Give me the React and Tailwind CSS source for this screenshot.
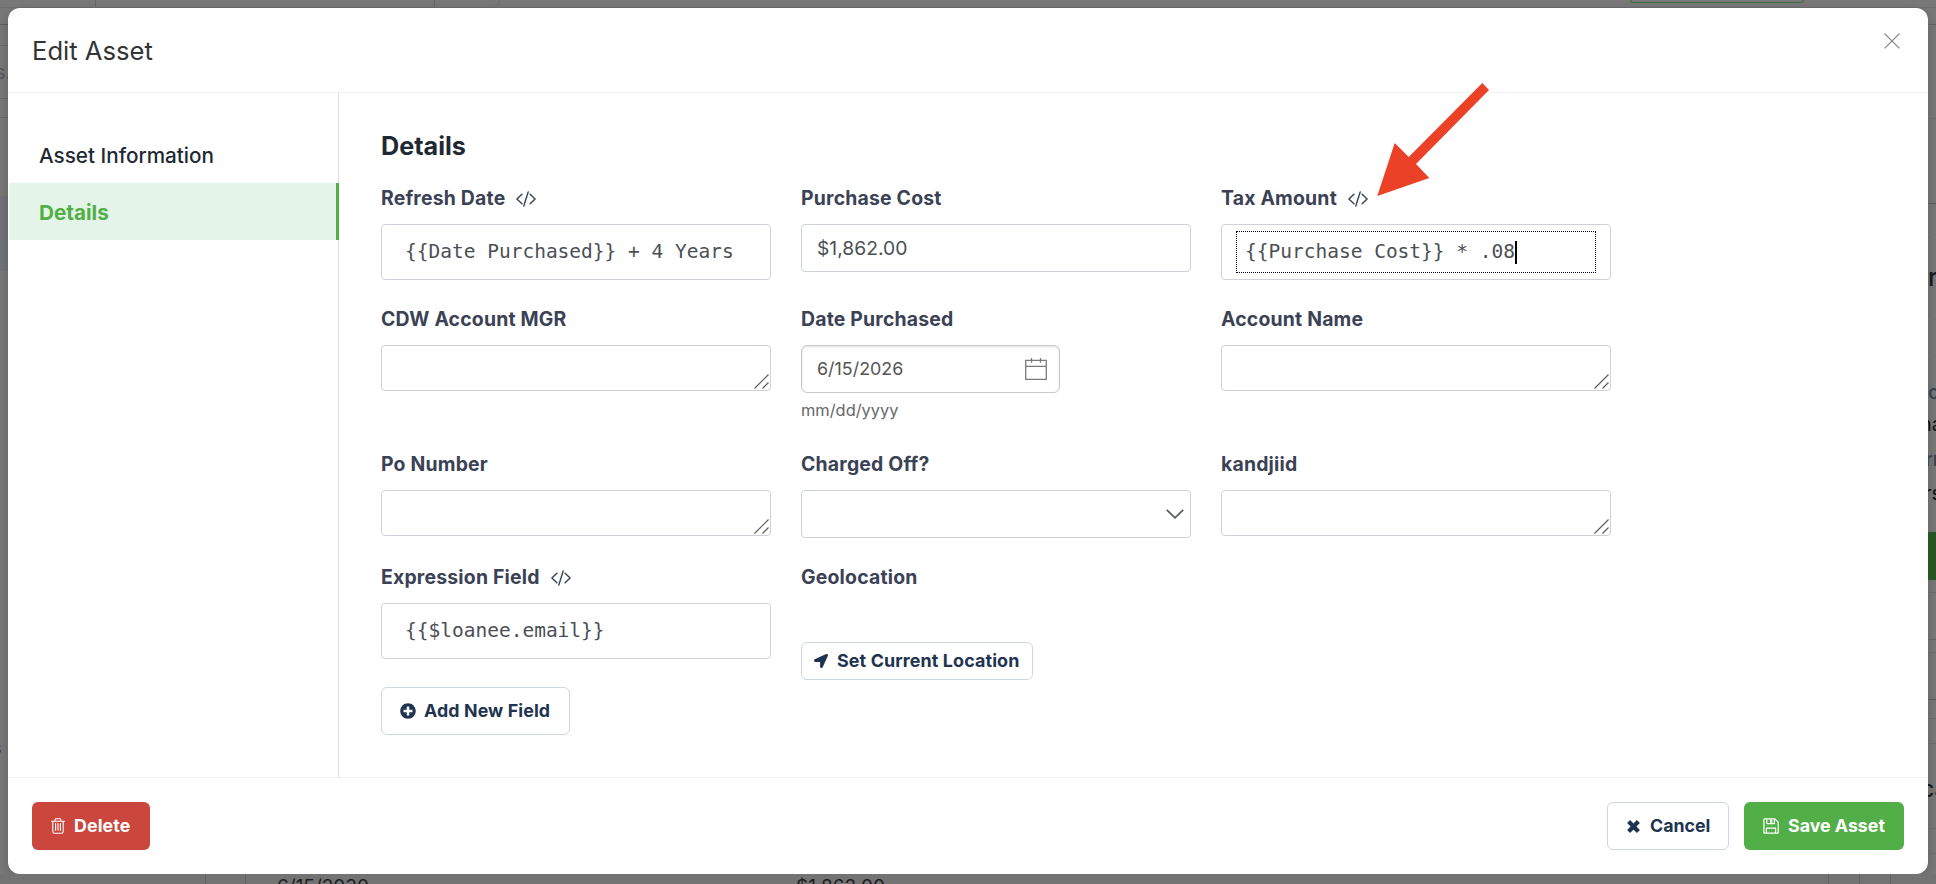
import React, { useState } from 'react';
import { FaLocationArrow, FaPlusCircle } from 'react-icons/fa';

const CodeIcon = () => (
    <svg className="w-5 h-4 shrink-0" viewBox="0 0 20 16" fill="none" stroke="#3b4255" strokeWidth="1.4" strokeLinecap="round" strokeLinejoin="round">
        <path d="M5.9 3.2 L0.9 8 L5.9 12.8 M14.1 3.2 L19.1 8 L14.1 12.8 M12.2 1 L7.8 15" />
    </svg>
);

const TrashIcon = () => (
    <svg className="w-[14px] h-4 shrink-0" viewBox="0 0 14 16" fill="none" stroke="currentColor" strokeWidth="1.1" strokeLinecap="round">
        <path d="M0.6 3.2 H13.4 M4.2 3 V1.6 Q4.2 0.8 5 0.8 H9 Q9.8 0.8 9.8 1.6 V3 M1.8 3.4 V13.6 Q1.8 15.3 3.4 15.3 H10.6 Q12.2 15.3 12.2 13.6 V3.4" />
        <path d="M4.6 5.6 V12.3 M7 5.6 V12.3 M9.4 5.6 V12.3" />
    </svg>
);

const SaveIcon = () => (
    <svg className="w-4 h-4 shrink-0" viewBox="0 0 16 16" fill="none" stroke="currentColor" strokeWidth="1.2" strokeLinejoin="round">
        <path d="M0.9 1.4 Q0.9 0.8 1.5 0.8 H11.8 L15.2 4.2 V14.6 Q15.2 15.2 14.6 15.2 H1.5 Q0.9 15.2 0.9 14.6 Z" />
        <path d="M3.8 1 V5.6 H11.4 V1 M3.4 15 V10.2 H12.6 V15" />
        <path d="M8.2 1.4 V4.8" strokeWidth="2.2" />
    </svg>
);

const TimesIcon = () => (
    <svg className="w-[13px] h-[13px] shrink-0" viewBox="0 0 13 13" fill="none" stroke="currentColor" strokeWidth="4.2">
        <path d="M1.6 1.6 L11.4 11.4 M11.4 1.6 L1.6 11.4" />
    </svg>
);

const CloseIcon = () => (
    <svg className="w-4 h-4" viewBox="0 0 16 16" fill="none" stroke="#85878f" strokeWidth="1.3">
        <path d="M0.6 0.6 L15.4 15.4 M15.4 0.6 L0.6 15.4" />
    </svg>
);

const CalendarIcon = () => (
    <svg className="w-[22px] h-[22px]" viewBox="0 0 22 22" fill="none" stroke="#7a7a7a" strokeWidth="1.3">
        <path d="M0.7 2.3 H21.3 V21.3 H0.7 Z M0.7 8.3 H21.3 M6.5 0 V4.8 M15.5 0 V4.8" />
    </svg>
);

const ChevronIcon = () => (
    <svg className="w-[18px] h-[10px]" viewBox="0 0 18 10" fill="none" stroke="#55585c" strokeWidth="1.7">
        <path d="M0.8 0.8 L9 8.8 L17.2 0.8" />
    </svg>
);

const ResizeHandle = () => (
    <svg className="w-[15px] h-[15px]" viewBox="0 0 15 15" fill="none" stroke="#5c5c5c" strokeWidth="1.2">
        <path d="M0.5 14.5 L14.5 0.5 M8.5 14.5 L14.5 8.5" />
    </svg>
);

const Field = ({ label, code, children }) => (
    <div className="w-[390px]">
        <div className="h-[30px] mb-[11px] pt-0.5 flex items-center gap-[11px] text-[19.4px] tracking-[0.2px] font-bold text-[#3b4255] whitespace-nowrap">
            <span>{label}</span>
            {code && <CodeIcon />}
        </div>
        {children}
    </div>
);

const TextArea = () => (
    <div className="h-[46px] flex items-end justify-end pr-px pb-px border border-[#cdd1da] rounded">
        <ResizeHandle />
    </div>
);

const Expression = ({ value, focused }) => (
    <div className="h-14 px-[14px] flex items-center border border-[#cdd1da] rounded font-['DejaVu_Sans_Mono',monospace] text-[19.5px] text-[#4b5055]">
        <div className={`w-full h-[42px] px-2 flex items-center border ${focused ? 'border-dotted border-black' : 'border-transparent'}`}>
            <span className="whitespace-pre">{value}</span>
            {focused && <span className="w-0.5 h-[23px] bg-black" />}
        </div>
    </div>
);

// Sliver of the record page that stays visible left of the dialog
const LeftStrip = () => (
    <div className="w-2 shrink-0 overflow-hidden flex flex-col">
        <div className="h-[17px] border-b border-[#5f5f62]" />
        <div className="h-[21px] border-b border-[#6c6c70]" />
        <div className="h-[53px] flex items-center border-b border-[#6a6a6e] text-[20px] text-[#55555a]"><span className="-ml-[5px]">s.</span></div>
        <div className="h-[19px] border-b border-[#6c6c70]" />
        <div className="h-[78px]" />
        <div className="h-[75px] bg-[#727479]" />
        <div className="h-[464px]" />
        <div className="h-[24px] flex items-center text-[18px] text-[#333] -ml-2">s</div>
    </div>
);

const RightStrip = () => (
    <div className="w-2 shrink-0 overflow-hidden flex flex-col leading-none">
        <div className="h-[17px] border-b border-[#5f5f62]" />
        <div className="h-[94px] border-b border-[#6c6c70]" />
        <div className="h-[85px] border-b border-[#5c5c60]" />
        <div className="h-[31px] border-b border-[#707074]" />
        <div className="h-[85px] flex items-center border-b border-[#707074] text-[25px] font-medium text-[#18191b]">ri</div>
        <div className="h-[37px] border-b border-[#707074]" />
        <div className="h-[18px]" />
        <div className="h-[34px] flex items-center text-[19px] font-semibold text-[#3b4255]">c</div>
        <div className="h-[30px] flex items-center text-[20px] text-[#101113]"><span className="-ml-2">na</span></div>
        <div className="h-[40px] flex items-center text-[19px] font-semibold text-[#3b4255]"><span className="-ml-[3px]">rr</span></div>
        <div className="h-[28px] flex items-center text-[20px] text-[#101113]"><span className="-ml-1">rs</span></div>
        <div className="h-[25px]" />
        <div className="h-[48px] bg-[#265423]" />
        <div className="h-[13px] border-b border-[#68686c]" />
        <div className="h-[47px] border-b border-[#62626e]" />
        <div className="h-[13px] border-b border-[#68686c]" />
        <div className="h-[47px] border-b border-[#5c5c60]" />
        <div className="h-[19px] border-b border-[#68686c]" />
        <div className="h-[25px] border-b border-[#68686c]" />
        <div className="h-[30px]" />
        <div className="h-[30px] flex items-center text-[23px] font-medium text-[#18191b]"><span className="-ml-[7px]">ca</span></div>
        <div className="h-[25px] border-b border-[#6c6c70]" />
        <div className="h-[25px] border-b border-[#6c6c70]" />
    </div>
);

const navItems = ['Asset Information', 'Details'];

const App = () => {
    const [active, setActive] = useState('Details');

    return (
        <div className="relative w-[1936px] h-[884px] overflow-hidden flex flex-col bg-[#797979] font-['Inter','Liberation_Sans',sans-serif]">
            <div className="h-2 shrink-0 flex border-b border-[#6e6e70]">
                <div className="w-24 border-r border-[#68686a]" />
                <div className="w-[339px] border-r border-[#68686a]" />
                <div className="w-[65px] border-r border-[#68686a] rounded-br-lg" />
                <div className="w-[174px] h-[3px] ml-[1130px] border border-t-0 border-[#3c6b41] rounded-b" />
            </div>

            <div className="h-[866px] shrink-0 flex">
                <LeftStrip />

                <div className="w-[1920px] flex flex-col bg-white rounded-xl shadow-[0_4px_14px_rgba(0,0,0,0.2)]">
                    <div className="h-[85px] shrink-0 flex justify-between pl-6 pr-7 border-b border-[#f0f0f2]">
                        <h1 className="pt-[25px] text-[25.6px] leading-9 text-[#333536]">Edit Asset</h1>
                        <button type="button" className="self-start mt-[25px]" aria-label="Close">
                            <CloseIcon />
                        </button>
                    </div>

                    <div className="h-[685px] shrink-0 flex border-b border-[#f0f0f2]">
                        <nav className="w-[331px] pt-[33px] pl-px border-r border-[#dcdde8]">
                            {navItems.map((item) => (
                                <button
                                    key={item}
                                    type="button"
                                    onClick={() => setActive(item)}
                                    className={`w-[330px] h-[57px] pl-[30px] pt-0.5 flex items-center text-[20.7px] ${
                                        active === item
                                        ? 'bg-[#e5f4e8] border-r-3 border-[#52af47] font-bold text-[#52af47]'
                                        : 'font-medium text-[#1f2933]'
                                    }`}
                                >
                                    {item}
                                </button>
                            ))}
                        </nav>

                        <div className="pl-[42px] pt-9">
                            <h2 className="h-[34px] mb-5 text-[25.2px] leading-[34px] font-bold text-[#1f2933]">Details</h2>

                            <div className="w-[1230px] flex flex-wrap gap-x-[30px] gap-y-6">
                                <Field label="Refresh Date" code>
                                    <Expression value="{{Date Purchased}} + 4 Years" />
                                </Field>
                                <Field label="Purchase Cost">
                                    <div className="h-12 px-[15px] pt-px flex items-center border border-[#cdd1da] rounded text-[19.3px] text-[#4b5055]">$1,862.00</div>
                                </Field>
                                <Field label="Tax Amount" code>
                                    <Expression value="{{Purchase Cost}} * .08" focused />
                                </Field>

                                <Field label="CDW Account MGR">
                                    <TextArea />
                                </Field>
                                <Field label="Date Purchased">
                                    <div className="w-[259px] h-12 pl-[15px] pr-3 flex items-center justify-between border border-[#c8c8c8] rounded-md shadow-[inset_0_1px_2px_rgba(0,0,0,0.12)] text-[17.9px] text-[#555]">
                                        <span className="pt-px">6/15/2026</span>
                                        <CalendarIcon />
                                    </div>
                                    <div className="h-8 pt-0.5 flex items-center text-[16.4px] text-[#66686b]">mm/dd/yyyy</div>
                                </Field>
                                <Field label="Account Name">
                                    <TextArea />
                                </Field>

                                <Field label="Po Number">
                                    <TextArea />
                                </Field>
                                <Field label="Charged Off?">
                                    <div className="h-12 pr-1.5 flex items-center justify-end border border-[#cdd1da] rounded">
                                        <ChevronIcon />
                                    </div>
                                </Field>
                                <Field label="kandjiid">
                                    <TextArea />
                                </Field>

                                <Field label="Expression Field" code>
                                    <Expression value="{{$loanee.email}}" />
                                </Field>
                                <Field label="Geolocation">
                                    <button type="button" className="w-[232px] h-[38px] mt-[50px] pl-3 flex items-center gap-[9px] border border-[#cfd5e2] rounded-md text-[17.9px] tracking-[0.12px] font-bold text-[#1e3450] whitespace-nowrap">
                                        <FaLocationArrow className="w-[14px] h-[14px]" />
                                        Set Current Location
                                    </button>
                                </Field>
                            </div>

                            <button type="button" className="w-[189px] h-12 mt-[7px] pl-[18px] flex items-center gap-[8px] border border-[#cfd5e2] rounded-md text-[17.8px] tracking-[0.12px] font-bold text-[#1e3450] whitespace-nowrap">
                                <FaPlusCircle className="w-4 h-4" />
                                Add New Field
                            </button>
                        </div>
                    </div>

                    <div className="flex-1 flex items-center justify-between px-6 text-[17.8px] font-bold">
                        <button type="button" className="w-[118px] h-12 pl-[19px] flex items-center gap-[9px] bg-[#cb463c] rounded-md tracking-[0.12px] text-white">
                            <TrashIcon />
                            Delete
                        </button>
                        <div className="flex gap-[15px]">
                            <button type="button" className="w-[122px] h-12 pl-[19px] flex items-center gap-[10px] border border-[#cfd5e2] rounded-md text-[#1e3450]">
                                <TimesIcon />
                                Cancel
                            </button>
                            <button type="button" className="w-[160px] h-12 pl-[19px] flex items-center gap-[9px] bg-[#52af47] rounded-md text-white whitespace-nowrap">
                                <SaveIcon />
                                Save Asset
                            </button>
                        </div>
                    </div>
                </div>

                <RightStrip />
            </div>

            <div className="h-[10px] shrink-0 flex bg-[#737373] overflow-hidden text-[19px] leading-none text-[#1c1c1e]">
                <div className="w-[206px] border-r border-[#646466]" />
                <div className="w-10 border-r border-[#646466]" />
                <div className="w-[520px] pl-[31px] pt-[3px]">6/15/2030</div>
                <div className="w-[1063px] pl-[30px] pt-[3px] border-r border-[#646466]">$1,862.00</div>
                <div className="w-[31px] border-r border-[#646466]" />
                <div className="w-[31px] border-r border-[#646466]" />
            </div>

            {/* Callout arrow pointing at the expression toggle */}
            <svg className="absolute left-[1377px] top-[83px] w-[113px] h-[114px] pointer-events-none" viewBox="0 0 113 114">
                <polygon fill="#ea4127" points="0.3,113 17.7,60 31.7,74 105.3,0 112,7 39,81 52.3,95" />
            </svg>
        </div>
    );
};

export default App;
